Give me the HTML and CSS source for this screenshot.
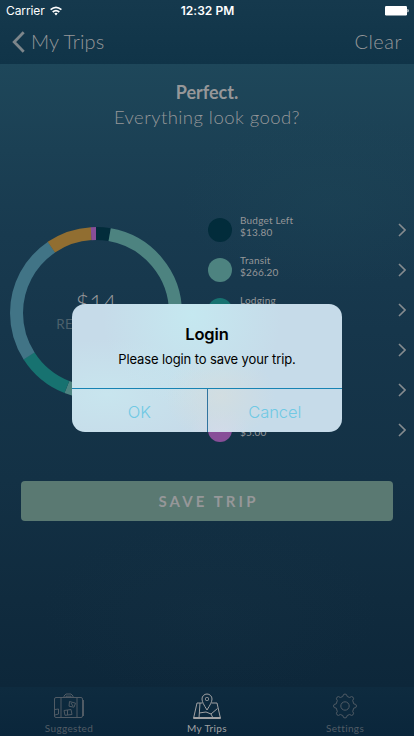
FILE: index.html
```html
<!DOCTYPE html>
<html lang="en">
<head>
<meta charset="utf-8">
<title>My Trips</title>
<link rel="stylesheet" href="styles.css">
</head>
<body>
<div class="screen">
  <header class="top">
    <div class="status">
      <div class="carrier"><span>Carrier</span>
        <svg width="12" height="10" viewBox="0 0 12 10" fill="none" stroke="#fff" stroke-width="1.7"><path d="M.6 3.7Q6-1 11.4 3.7M2.7 6Q6 3.1 9.3 6"/><path d="M4.3 7.5Q6 6.2 7.7 7.5L6 9.4Z" fill="#fff" stroke="none"/></svg>
      </div>
      <div class="clock">12:32 PM</div>
      <svg class="battery" width="24" height="10" viewBox="0 0 24 10"><rect width="22" height="9.4" rx="1.2" fill="#fff"/><path d="M22.8 3.2q1.2 1.5 0 3z" fill="#fff" stroke="#fff" stroke-width=".5"/></svg>
    </div>
    <nav class="nav">
      <div class="back">
        <svg width="13" height="22" viewBox="0 0 13 22" fill="none" stroke="#7d868b" stroke-width="2.8"><path d="M11.700 1.200L2.200 11l9.500 9.800"/></svg>
        <span>My Trips</span>
      </div>
      <span class="clear">Clear</span>
    </nav>
  </header>
  <main>
    <div class="intro"><h1>Perfect.</h1><p>Everything look good?</p></div>
    <section class="budget">
      <div class="chart">
        <svg class="ring" width="172" height="172" viewBox="0 0 172 172" fill="none" stroke-width="13">
          <g transform="rotate(-90 86 86)">
            <circle cx="86" cy="86" r="79.5" pathLength="360" stroke="#022c3b" stroke-dasharray="10 350"/>
            <circle cx="86" cy="86" r="79.5" pathLength="360" stroke="#4d8380" stroke-dasharray="191.6 168.4" stroke-dashoffset="-9.9"/>
            <circle cx="86" cy="86" r="79.5" pathLength="360" stroke="#177270" stroke-dasharray="36 324" stroke-dashoffset="-201.5"/>
            <circle cx="86" cy="86" r="79.5" pathLength="360" stroke="#417486" stroke-dasharray="88.700 271.300" stroke-dashoffset="-237.3"/>
            <circle cx="86" cy="86" r="79.5" pathLength="360" stroke="#916e31" stroke-dasharray="30.800 329.200" stroke-dashoffset="-325.8"/>
            <circle cx="86" cy="86" r="79.5" pathLength="360" stroke="#884e98" stroke-dasharray="3.6 356.4" stroke-dashoffset="-356.4"/>
          </g>
        </svg>
        <div class="total"><strong>$14</strong><span>REMAINING</span></div>
      </div>
      <ul class="legend">
        <li><i class="dot left"></i><div><b>Budget Left</b><em>$13.80</em></div><svg class="chev" viewBox="0 0 8 14"><path d="M1 1l6 6-6 6"/></svg></li>
        <li><i class="dot transit"></i><div><b>Transit</b><em>$266.20</em></div><svg class="chev" viewBox="0 0 8 14"><path d="M1 1l6 6-6 6"/></svg></li>
        <li><i class="dot lodging"></i><div><b>Lodging</b></div><svg class="chev" viewBox="0 0 8 14"><path d="M1 1l6 6-6 6"/></svg></li>
        <li><i class="dot food"></i><div></div><svg class="chev" viewBox="0 0 8 14"><path d="M1 1l6 6-6 6"/></svg></li>
        <li><i class="dot fun"></i><div></div><svg class="chev" viewBox="0 0 8 14"><path d="M1 1l6 6-6 6"/></svg></li>
        <li><i class="dot other"></i><div><b>&nbsp;</b><em>$5.00</em></div><svg class="chev" viewBox="0 0 8 14"><path d="M1 1l6 6-6 6"/></svg></li>
      </ul>
    </section>
    <button class="save">SAVE TRIP</button>
  </main>
  <footer class="tabs">
    <div class="tab">
      <svg width="32" height="26" viewBox="0 0 32 26"><rect x="1.500" y="4.500" width="28" height="20" rx="1.500"/><path d="M30.5 7v16M11 4.500V3l2-2h5l2 2v1.500M13 4.500V3.200h5v1.300M8 5v19.500M24 5v19.500M16.500 8.500l6 1.700-1.500 4-5-1zM18 10l2 3M11 17.5l7-1 1 5-7 .8zM14.500 17v5M2 16.500l3.500-.5v5L2 22"/></svg>
      <span>Suggested</span>
    </div>
    <div class="tab active">
      <svg width="32" height="26" viewBox="0 0 32 26"><path d="M11.500 10H6L2.500 25.500h27L26 10h-5.500M2.500 24.500h27M9 10L8 25M8 20l7-1 5 2 6.500-5.500M20 21l2 4M16 17C13 12 11 9 11 6a5 5 0 0110 0c0 3-2 6-5 11z"/><rect x="14.500" y="4.500" width="3" height="3" rx="1"/></svg>
      <span>My Trips</span>
    </div>
    <div class="tab">
      <svg width="32" height="26" viewBox="0 0 32 26"><path d="M13.800 3.500q.2-2.500 2.200-2.500t2.200 2.500l2.500 1q1.900-1.700 3.300-.3t-.3 3.300l1 3.300q2.800.2 2.800 2.200t-2.800 2.200l-1 3.300q1.700 1.900.3 3.300t-3.300-.3l-2.500 1Q18 25 16 25t-2.200-2.500l-2.500-1Q9.400 23.200 8 21.800t.3-3.300l-1-3.300Q4.500 15 4.500 13t2.800-2.200l1-3.300Q6.600 5.600 8 4.200t3.300.3z"/><circle cx="16" cy="13" r="4.200"/></svg>
      <span>Settings</span>
    </div>
  </footer>
  <div class="alert" role="dialog">
    <div class="message"><h2>Login</h2><p>Please login to save your trip.</p></div>
    <div class="actions"><button>OK</button><button>Cancel</button></div>
  </div>
</div>
</body>
</html>
```
FILE: styles.css
```css
* { box-sizing: border-box; margin: 0; padding: 0; }
body { font-family: Lato, sans-serif; color: #969799; }
button { border: 0; background: none; font: inherit; }
.screen {
  position: relative; width: 414px; height: 736px; overflow: hidden;
  display: flex; flex-direction: column;
  background:
    radial-gradient(ellipse 150px 90px at 330px 200px, rgba(30,72,88,.3), transparent),
    radial-gradient(ellipse 170px 90px at 210px 610px, rgba(24,52,70,.2), transparent),
    linear-gradient(#1e475a 64px, #1b4054 150px, #183a4f 235px, #16364b 330px, #133145 480px, #102b3e 600px, #0d273a 686px, #0c263a 736px);
}
.top { height: 64px; background: linear-gradient(#15394d, #103448); }
.status {
  height: 20px; display: grid; grid-template-columns: 1fr auto 1fr; align-items: center;
  padding: 1px 5px 0 6px; color: #fff; font: 12px/19px Inter, sans-serif;
}
.carrier { display: flex; align-items: center; gap: 5px; letter-spacing: -.1px; }
.clock { font-weight: 600; letter-spacing: .05px; }
.battery { justify-self: end; }
.nav {
  height: 44px; display: flex; justify-content: space-between; align-items: center;
  padding: 0 12px; font-size: 20px; font-weight: 300; line-height: 24px;
}
.back { display: flex; align-items: center; gap: 6px; }
.back span { letter-spacing: .1px; margin-top: -2px; }
.clear { letter-spacing: .5px; margin-top: -2px; }
main { height: 623px; }
.intro { padding-top: 16px; text-align: center; font-size: 18px; line-height: 25px; }
.intro h1 { font-size: 18px; font-weight: 700; line-height: 24px; }
.intro p { font-weight: 300; font-size: 18.500px; letter-spacing: .45px; padding-top: 1px; line-height: 24px; }
.budget { display: flex; margin-top: 81px; height: 240px; }
.chart { width: 208px; padding: 17px 0 0 10px; display: grid; grid-template-columns: 172px; align-content: start; }
.ring, .total { grid-area: 1 / 1; }
.total { display: flex; flex-direction: column; align-items: center; padding-top: 62px; }
.total strong { font-size: 24px; line-height: 28px; font-weight: 300; letter-spacing: -.3px; }
.total span { color: #4c616d; font-size: 13.500px; line-height: 15px; letter-spacing: .4px; }
.legend { flex: 1; list-style: none; }
.legend li { height: 40px; display: flex; align-items: center; padding-right: 8px; }
.legend div { flex: 1; height: 32px; padding-left: 8px; font-size: 10px; line-height: 12px; }
.legend b, .legend em { display: block; font-style: normal; font-weight: 400; letter-spacing: .2px; }
.dot { width: 24px; height: 24px; border-radius: 50%; }
.left { background: #022c3b; }
.transit { background: #4d8380; }
.lodging { background: #177270; }
.food { background: #417486; }
.fun { background: #916e31; }
.other { background: #884e98; }
.chev { width: 8px; height: 14px; fill: none; stroke: #858b8f; stroke-width: 1.600; }
.save {
  display: block; width: 372px; height: 40px; margin: 31px 0 0 21px; border-radius: 4px;
  background: #5a7972; color: #969799; font-size: 15px; font-weight: 700; letter-spacing: 3.100px; padding-left: 3px;
}
.tabs {
  flex: 1; display: flex; justify-content: space-between; padding: 6px 21px 0;
  background: linear-gradient(#0e2b3f, #0a263b);
}
.tab { width: 96px; display: flex; flex-direction: column; align-items: center; color: #505b65; font-size: 10px; line-height: 13px; gap: 3px; letter-spacing: .35px; }
.tab svg { fill: none; stroke: #505b65; stroke-width: 1; }
.tab.active { color: #a0a1a3; }
.tab.active svg { stroke: #a0a1a3; }
.alert {
  position: absolute; left: 72px; top: 304px; width: 270px; height: 128px;
  border-radius: 13px; overflow: hidden; display: flex; flex-direction: column;
  font-family: Inter, sans-serif; text-align: center; color: #000;
  background:
    radial-gradient(ellipse 55px 45px at 148px 92px, rgba(214,222,222,.75), transparent),
    radial-gradient(ellipse 30px 25px at 148px 128px, rgba(212,217,235,.8), transparent),
    radial-gradient(ellipse 90px 95px at 120px 10px, #c5e8f0, rgba(198,219,233,0)),
    radial-gradient(ellipse 110px 55px at 35px 90px, #c8e5ee, rgba(198,219,233,0)),
    #c6dbe9;
}
.message { height: 84px; padding-top: 20px; }
.message h2 { font-size: 16.500px; line-height: 21px; font-weight: 600; letter-spacing: -.1px; }
.message p { margin-top: 6px; font-size: 13px; line-height: 17px; letter-spacing: -.12px; }
.actions { flex: 1; display: flex; border-top: 1px solid #1783b3; }
.actions button { flex: 1 1 0; padding-top: 2px; color: #70c9e4; font-size: 16.500px; font-weight: 300; letter-spacing: -.1px; }
.actions button + button { border-left: 1px solid #31749f; }
```
